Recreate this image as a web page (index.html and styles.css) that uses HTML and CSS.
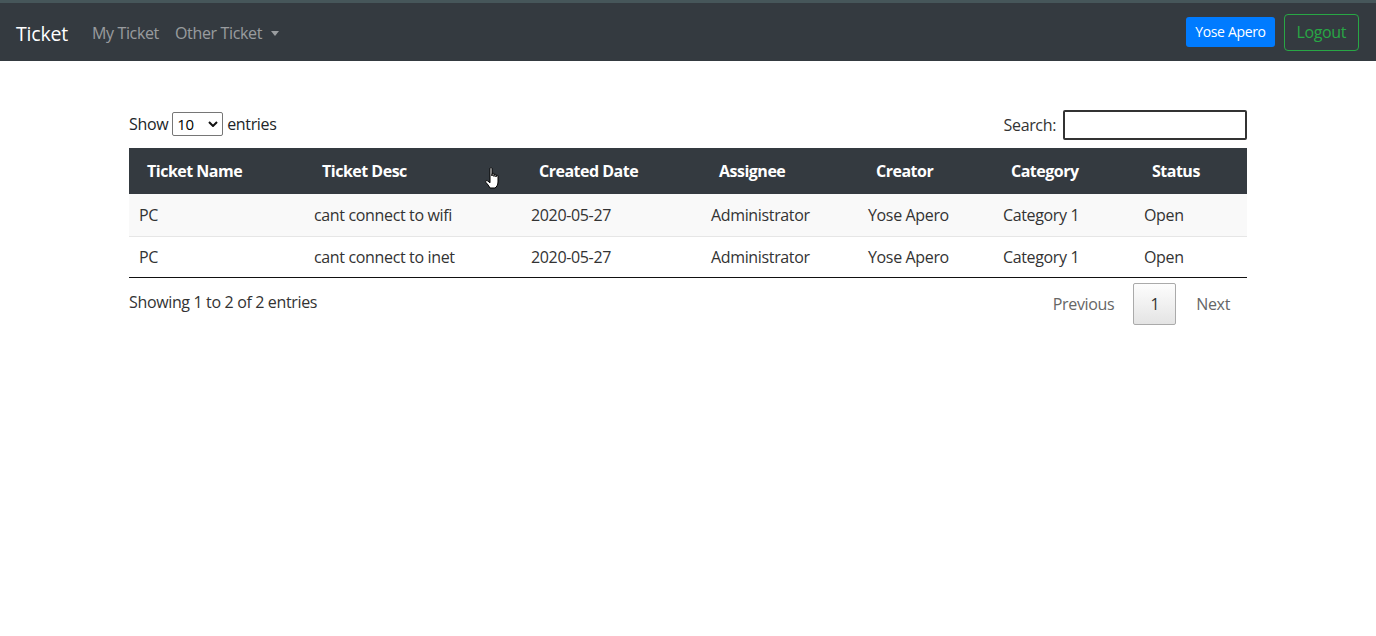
FILE: index.html
```html
<!DOCTYPE html>
<html>
<head>
<meta charset="utf-8">
<title>Ticket</title>
<link rel="stylesheet" href="styles.css">
</head>
<body>
<nav class="navbar">
  <div class="nav-left">
    <span class="brand">Ticket</span>
    <span class="nav-link">My Ticket</span>
    <span class="nav-link dropdown">Other Ticket <span class="caret"></span></span>
  </div>
  <div class="nav-right">
    <span class="btn-user">Yose Apero</span>
    <span class="btn-logout">Logout</span>
  </div>
</nav>
<main class="container">
  <div class="toolbar">
    <label class="length">Show <span class="select">10 <svg class="chev" viewBox="0 0 10 6" width="10" height="6"><path d="M1 1 L5 5 L9 1" fill="none" stroke="#111" stroke-width="2"/></svg></span> entries</label>
    <label class="search">Search: <span class="search-input"></span></label>
  </div>
  <div class="table-wrap">
    <table class="tickets">
      <colgroup>
        <col style="width:175px"><col style="width:217px"><col style="width:180px"><col style="width:157px"><col style="width:135px"><col style="width:141px"><col style="width:113px">
      </colgroup>
      <thead>
        <tr><th>Ticket Name</th><th>Ticket Desc</th><th>Created Date</th><th>Assignee</th><th>Creator</th><th>Category</th><th>Status</th></tr>
      </thead>
      <tbody>
        <tr class="odd"><td>PC</td><td>cant connect to wifi</td><td>2020-05-27</td><td>Administrator</td><td>Yose Apero</td><td>Category 1</td><td>Open</td></tr>
        <tr><td>PC</td><td>cant connect to inet</td><td>2020-05-27</td><td>Administrator</td><td>Yose Apero</td><td>Category 1</td><td>Open</td></tr>
      </tbody>
    </table>
    <svg class="cursor" width="20" height="26" viewBox="0 0 20 26">
      <path d="M6 2.5 C6 1.5 8 1.5 8 2.5 L8 10 L8 8 C8 7 10 7 10 8 L10 10.5 L10 9 C10 8 12 8 12 9 L12 11 L12 10 C12 9 14 9 14 10 L14 16 C14 19 12.5 21 11 22 L6 22 C5 20 3.5 18 2 16.5 C1 15.2 2.5 13.8 3.8 15 L6 16.8 Z" fill="#fff" stroke="#000" stroke-width="1"/>
    </svg>
  </div>
  <div class="footer-row">
    <div class="info">Showing 1 to 2 of 2 entries</div>
    <div class="paging">
      <span class="page-link">Previous</span>
      <span class="page-current">1</span>
      <span class="page-link">Next</span>
    </div>
  </div>
</main>
</body>
</html>
```
FILE: styles.css
```css
html, body {
  margin: 0;
  padding: 0;
  background: #fff;
  font-family: "Open Sans", "Noto Sans", sans-serif;
  color: #212529;
}
.navbar {
  height: 58px;
  background: #343a40;
  border-top: 3px solid #46565a;
  display: flex;
  align-items: center;
  justify-content: space-between;
  padding: 0 16px;
}
.nav-left {
  display: flex;
  align-items: center;
  padding-top: 2px;
}
.brand {
  color: #fff;
  font-size: 19.5px;
  margin-right: 24px;
  letter-spacing: -0.2px;
}
.nav-link {
  color: rgba(255,255,255,0.5);
  font-size: 16px;
  margin-right: 16px;
  letter-spacing: -0.35px;
}
.dropdown {
  display: inline-flex;
  align-items: center;
}
.caret {
  display: inline-block;
  width: 0;
  height: 0;
  margin-left: 9px;
  border-left: 4.5px solid transparent;
  border-right: 4.5px solid transparent;
  border-top: 5px solid rgba(255,255,255,0.5);
}
.nav-right {
  display: flex;
  align-items: center;
  gap: 9px;
  margin-right: 1px;
}
.btn-user {
  background: #007bff;
  color: #fff;
  font-size: 14px;
  letter-spacing: -0.35px;
  padding: 0 9px;
  height: 30px;
  line-height: 30px;
  border-radius: 3px;
}
.btn-logout {
  color: #28a745;
  border: 1px solid #28a745;
  font-size: 16px;
  letter-spacing: -0.4px;
  height: 35px;
  line-height: 35px;
  padding: 0 12px;
  border-radius: 4px;
}
.container {
  width: 1118px;
  margin: 0 auto;
  padding-top: 46px;
  font-size: 16px;
  letter-spacing: -0.35px;
}
.toolbar {
  display: flex;
  justify-content: space-between;
  align-items: center;
  height: 33px;
}
.length {
  display: flex;
  align-items: center;
  gap: 4px;
}
.select {
  display: inline-flex;
  align-items: center;
  justify-content: space-between;
  width: 41px;
  height: 22px;
  border: 1px solid #767676;
  border-radius: 2px;
  padding: 0 4px;
  font-size: 15px;
  color: #000;
}
.chev { margin-left: 8px; }
.search {
  display: flex;
  align-items: center;
  gap: 7px;
  color: #333;
  padding-top: 2px;
}
.search-input {
  display: inline-block;
  width: 180px;
  height: 26px;
  border: 2px solid #333;
  border-radius: 2px;
  background: #fff;
}
.table-wrap {
  position: relative;
  margin-top: 8px;
}
.tickets {
  width: 100%;
  border-collapse: collapse;
  table-layout: fixed;
  border-bottom: 1px solid #111;
}
.tickets th {
  background: #343a40;
  color: #fff;
  font-weight: 700;
  text-align: left;
  height: 46px;
  padding: 0 10px 0 18px;
  letter-spacing: -0.5px;
}
.tickets td {
  padding: 0 10px;
  height: 40px;
  border-top: 1px solid #e6e6e6;
  color: #333;
}
.tickets tbody tr:first-child td {
  border-top: none;
  height: 42px;
}
.tickets tr.odd td {
  background: #f9f9f9;
}
.cursor {
  position: absolute;
  left: 355px;
  top: 18px;
}
.footer-row {
  display: flex;
  justify-content: space-between;
  align-items: center;
  padding-top: 5px;
}
.info {
  color: #333;
  margin-top: -5px;
}
.paging {
  display: flex;
  align-items: center;
  margin-right: 8px;
}
.page-link {
  color: #666;
  padding: 0 9px;
}
.page-current {
  width: 41px;
  height: 40px;
  line-height: 40px;
  text-align: center;
  border: 1px solid #aaa;
  border-radius: 2px;
  background: linear-gradient(#fdfdfd, #e4e4e4);
  color: #333;
  margin: 0 11px 0 10px;
}
```
